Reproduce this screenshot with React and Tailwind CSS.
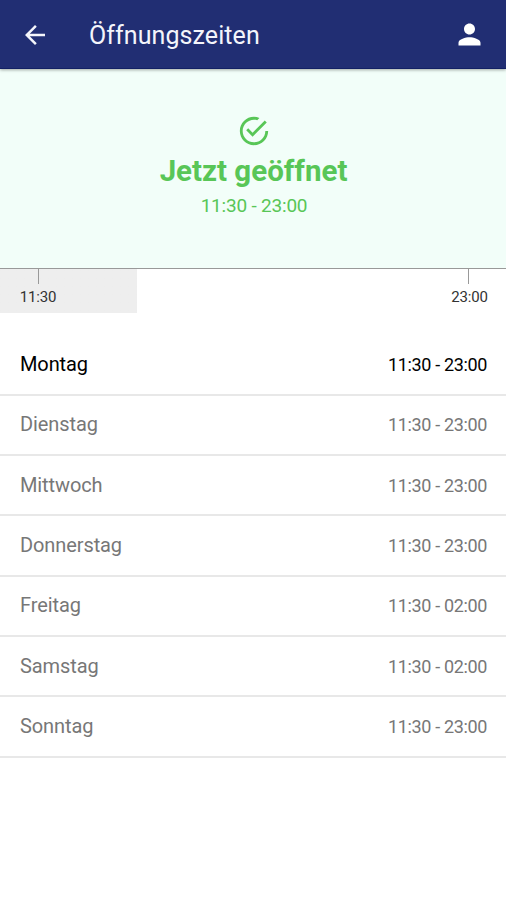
import { MdArrowBack, MdPerson } from "react-icons/md";

const DAYS = [
  { name: "Montag", hours: "11:30 - 23:00", today: true },
  { name: "Dienstag", hours: "11:30 - 23:00" },
  { name: "Mittwoch", hours: "11:30 - 23:00" },
  { name: "Donnerstag", hours: "11:30 - 23:00" },
  { name: "Freitag", hours: "11:30 - 02:00" },
  { name: "Samstag", hours: "11:30 - 02:00" },
  { name: "Sonntag", hours: "11:30 - 23:00" },
];

function IconCheckCircle() {
  return (
    <svg viewBox="0 0 24 24" className="ml-0.5 h-[34px] w-[34px]" fill="currentColor" aria-hidden="true">
      <path d="M7.91 10.08L6.5 11.5 11 16 21 6l-1.41-1.42L11 13.17zM20 12c0 4.42-3.58 8-8 8s-8-3.58-8-8 3.58-8 8-8c.79 0 1.55.12 2.26.34l1.58-1.58A9.95 9.95 0 0 0 12 2C6.48 2 2 6.48 2 12s4.48 10 10 10 10-4.48 10-10z" />
    </svg>
  );
}

function Header() {
  return (
    <header className="z-10 flex h-[69px] items-center border-b border-[#122064] bg-[#212e73] px-5 pt-0.5 text-[#f4f5fb] shadow-[0_1px_3px_rgba(0,0,0,0.35)]">
      <button type="button" aria-label="Zurück">
        <MdArrowBack className="h-[30px] w-[30px]" />
      </button>
      <h1 className="ml-[39px] flex-1 pt-0.5 text-[25px] tracking-[0.08px]">Öffnungszeiten</h1>
      <button type="button" aria-label="Profil" className="pb-px text-white">
        <MdPerson className="h-[33px] w-[33px]" />
      </button>
    </header>
  );
}

function Status() {
  return (
    <section className="flex h-[199px] flex-col items-center bg-[#f2fef9] pt-[45px] text-[#58c657]">
      <IconCheckCircle />
      <p className="mt-[6px] ml-px text-[29.5px] leading-[34px] font-bold">Jetzt geöffnet</p>
      <p className="mt-1.5 ml-0.5 text-[19px] leading-[24px] tracking-[-0.2px]">11:30 - 23:00</p>
    </section>
  );
}

function Timeline() {
  return (
    <section className="h-[45px] border-t border-[#999] text-[15px] tracking-[-0.15px] text-[#333]">
      <div className="flex h-full justify-between bg-linear-to-r from-[#eee] from-[137px] to-white to-[137px]">
        <div className="flex w-[76px] flex-col items-center">
          <span className="h-[15px] w-px bg-[#999]" />
          <span className="mt-[3px] leading-[20px]">11:30</span>
        </div>
        <div className="flex w-[75px] flex-col items-center">
          <span className="h-[15px] w-px bg-[#999]" />
          <span className="mt-[3px] ml-0.5 leading-[20px]">23:00</span>
        </div>
      </div>
    </section>
  );
}

export default function App() {
  return (
    <main className="flex h-[900px] w-full flex-col overflow-hidden bg-white font-[Roboto,sans-serif]">
      <Header />
      <Status />
      <Timeline />
      <ul className="mt-[22.2px]">
        {DAYS.map((day) => (
          <li
            key={day.name}
            className={`flex h-[60.35px] items-center justify-between border-b-2 border-[#e8e8e8] pr-[19px] pb-px pl-5 ${day.today ? "text-black" : "text-[#777]"}`}
          >
            <span className="text-[20px] tracking-[-0.1px]">{day.name}</span>
            <span className="pt-px text-[18px] tracking-[-0.35px]">{day.hours}</span>
          </li>
        ))}
      </ul>
    </main>
  );
}
